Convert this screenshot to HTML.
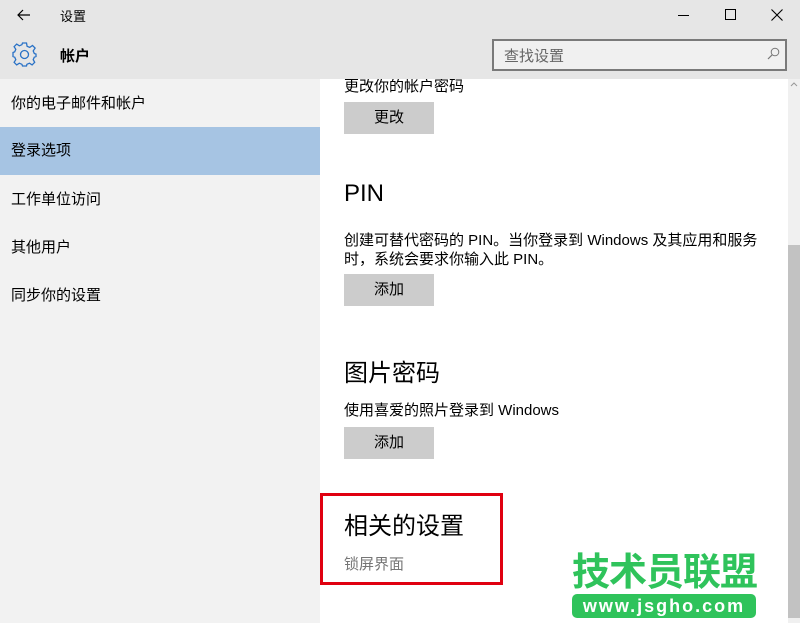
<!DOCTYPE html>
<html><head><meta charset="utf-8"><style>
*{margin:0;padding:0;box-sizing:border-box}
body{width:800px;height:623px;overflow:hidden;background:#fff;font-family:"Liberation Sans","Noto Sans CJK SC",sans-serif;color:#000;position:relative}
.abs{position:absolute}
.hdr{left:0;top:0;width:800px;height:79px;background:#e6e6e6;z-index:1}
.z{z-index:2}
.side{left:0;top:79px;width:320px;height:544px;background:#f2f2f2}
.item{position:absolute;left:0;width:320px;height:48px;line-height:48px;padding-left:11px;font-size:15px;color:#000}
.sel{background:#a6c4e3}
.btn{position:absolute;left:344px;width:90px;height:32px;background:#cccccc;font-size:15px;text-align:center;line-height:32px}
.t{position:absolute;left:344px;font-size:15px;white-space:nowrap}
.h{position:absolute;left:344px;font-size:24px;white-space:nowrap}
</style></head><body>
<div class="abs hdr"></div>
<svg class="abs z" style="left:16px;top:7px" width="16" height="16" viewBox="0 0 16 16"><path d="M14 8H2M7 3L2 8l5 5" stroke="#000" stroke-width="1.2" fill="none"/></svg>
<div class="abs z" style="left:60px;top:6px;font-size:13px">设置</div>
<svg class="abs z" style="left:11px;top:41px" width="27" height="27" viewBox="-13.5 -13.5 27 27"><g fill="none" stroke="#2a72c6" stroke-width="1.3">
<path d="M-2,-11.5 L2,-11.5 L2.6,-8.2 L5.2,-7.1 L8,-9 L10.6,-6.4 L8.7,-3.6 L9.8,-1 L11.5,-0.4 L11.5,2 L9.8,2.6 L8.7,5.2 L10.2,7.8 L7.6,10.4 L5,8.7 L2.4,9.8 L2,11.5 L-2,11.5 L-2.6,9.8 L-5.2,8.7 L-7.8,10.4 L-10.4,7.8 L-8.7,5.2 L-9.8,2.6 L-11.5,2 L-11.5,-2 L-9.8,-2.6 L-8.7,-5.2 L-10.4,-7.8 L-7.8,-10.4 L-5.2,-8.7 L-2.6,-9.8 Z"/>
<circle cx="0" cy="0" r="4"/></g></svg>
<div class="abs z" style="left:60px;top:45px;font-size:15px;font-weight:bold">帐户</div>
<div class="abs z" style="left:678px;top:15px;width:11px;height:1px;background:#000"></div>
<div class="abs z" style="left:725px;top:9px;width:11px;height:11px;border:1px solid #000"></div>
<svg class="abs z" style="left:771px;top:9px" width="12" height="12" viewBox="0 0 12 12"><path d="M0.5 0.5L11.5 11.5M11.5 0.5L0.5 11.5" stroke="#000" stroke-width="1.1"/></svg>
<div class="abs z" style="left:492px;top:39px;width:295px;height:32px;border:2px solid #7a7a7a;background:#f0f0f0"></div>
<div class="abs z" style="left:504px;top:45px;font-size:15px;color:#666">查找设置</div>
<svg class="abs z" style="left:767px;top:47px" width="13" height="13" viewBox="0 0 13 13"><circle cx="8" cy="5" r="3.8" stroke="#777" fill="none" stroke-width="1"/><path d="M5.3 7.7L1 12" stroke="#777" stroke-width="1.2"/></svg>
<div class="abs side"></div>
<div class="item" style="top:80px">你的电子邮件和帐户</div>
<div class="item sel" style="top:127px">登录选项</div>
<div class="item" style="top:176px">工作单位访问</div>
<div class="item" style="top:224px">其他用户</div>
<div class="item" style="top:272px">同步你的设置</div>
<div class="t" style="top:75px">更改你的帐户密码</div>
<div class="btn" style="top:102px">更改</div>
<div class="h" style="top:180px">PIN</div>
<div class="t" style="top:229px">创建可替代密码的 PIN。当你登录到 Windows 及其应用和服务</div>
<div class="t" style="top:248px">时，系统会要求你输入此 PIN。</div>
<div class="btn" style="top:274px">添加</div>
<div class="h" style="top:353px">图片密码</div>
<div class="t" style="top:399px">使用喜爱的照片登录到 Windows</div>
<div class="btn" style="top:427px">添加</div>
<div class="h" style="top:506px">相关的设置</div>
<div class="t" style="top:553px;color:#767676">锁屏界面</div>
<div class="abs" style="left:320px;top:493px;width:183px;height:92px;border:3px solid #e00010"></div>
<div class="abs" style="left:788px;top:79px;width:12px;height:544px;background:#f0f0f0"></div>
<div class="abs" style="left:788px;top:245px;width:12px;height:373px;background:#c2c2c2"></div>
<svg class="abs" style="left:790px;top:81px" width="8" height="6" viewBox="0 0 8 6"><path d="M1 5L4 2l3 3" stroke="#999" fill="none"/></svg>
<div class="abs" style="left:572px;top:553px;font-size:38px;font-weight:bold;color:#2fc35b;letter-spacing:-1px;line-height:40px;white-space:nowrap">技术员联盟</div>
<div class="abs" style="left:572px;top:594px;width:184px;height:24px;border-radius:5px;background:#2fc35b;color:#fff;font-size:18px;font-weight:bold;text-align:center;line-height:24px;letter-spacing:2px">www.jsgho.com</div>
</body></html>
